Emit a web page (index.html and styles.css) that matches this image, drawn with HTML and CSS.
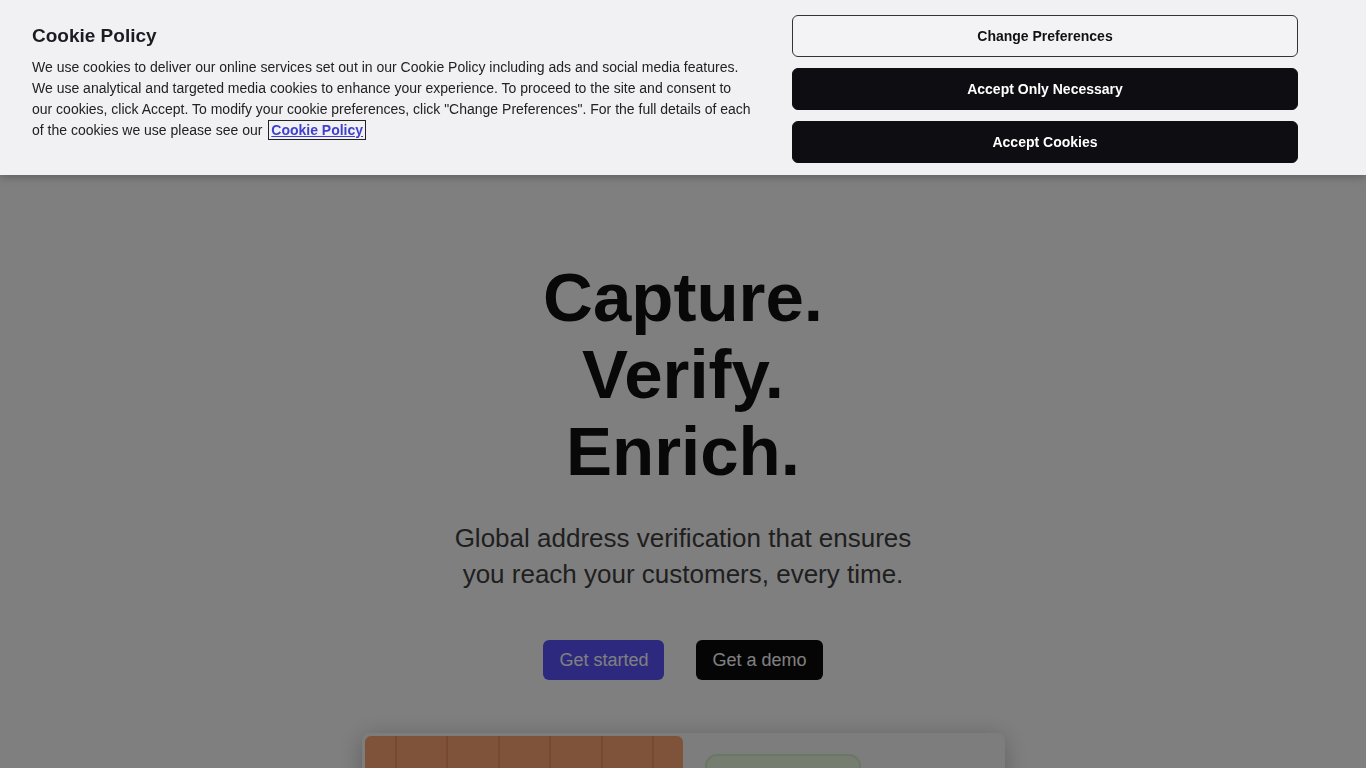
FILE: index.html
```html
<!DOCTYPE html>
<html lang="en">
<head>
    <meta charset="UTF-8">
    <meta name="viewport" content="width=device-width, initial-scale=1.0">
    <title>Capture. Verify. Enrich.</title>
    <link rel="stylesheet" href="styles.css">
</head>
<body>
    <main class="hero">
        <h1 class="hero-title">Capture.<br>Verify.<br>Enrich.</h1>
        <p class="hero-sub">Global address verification that ensures<br>you reach your customers, every time.</p>
        <div class="hero-actions">
            <a href="#" class="btn btn-primary">Get started</a>
            <a href="#" class="btn btn-dark">Get a demo</a>
        </div>

        <div class="preview-card">
            <div class="preview-map">
                <span class="map-col"></span>
                <span class="map-col"></span>
                <span class="map-col"></span>
                <span class="map-col"></span>
                <span class="map-col"></span>
                <span class="map-col"></span>
            </div>
            <div class="preview-side">
                <div class="status-pill"></div>
            </div>
        </div>
    </main>

    <div class="overlay"></div>

    <div class="cookie-banner" id="cookieBanner">
        <div class="cookie-text">
            <h2>Cookie Policy</h2>
            <p>We use cookies to deliver our online services set out in our Cookie Policy including ads and social media features. We use analytical and targeted media cookies to enhance your experience. To proceed to the site and consent to our cookies, click Accept. To modify your cookie preferences, click "Change Preferences". For the full details of each of the cookies we use please see our <a href="#" class="cookie-link">Cookie Policy</a></p>
        </div>
        <div class="cookie-buttons">
            <button class="cookie-btn cookie-btn-outline">Change Preferences</button>
            <button class="cookie-btn">Accept Only Necessary</button>
            <button class="cookie-btn">Accept Cookies</button>
        </div>
    </div>
</body>
</html>
```

FILE: styles.css
```css
body {
    margin: 0;
    font-family: "Liberation Sans", Arial, sans-serif;
    background-color: #ffffff;
    color: #141414;
    overflow: hidden;
}
.hero {
    display: flex;
    flex-direction: column;
    align-items: center;
    padding-top: 259px;
    text-align: center;
}
.hero-title {
    margin: 0;
    font-size: 69px;
    line-height: 77px;
    font-weight: bold;
    color: #111;
}
.hero-sub {
    margin: 30px 0 0 0;
    font-size: 26px;
    line-height: 36px;
    color: #3e3e3e;
}
.hero-actions {
    display: flex;
    gap: 32px;
    margin-top: 48px;
}
.btn {
    display: inline-flex;
    align-items: center;
    height: 40px;
    padding: 0 16px;
    border-radius: 6px;
    font-size: 18px;
    color: #ffffff;
    text-decoration: none;
}
.btn-primary {
    background-color: #5b52ff;
}
.btn-dark {
    background-color: #0a0a0a;
}
.preview-card {
    display: flex;
    width: 643px;
    height: 200px;
    box-sizing: border-box;
    margin-top: 53px;
    padding: 3px;
    background-color: #fafafa;
    border-radius: 8px;
    box-shadow: 0 4px 24px rgba(0,0,0,0.25);
}
.preview-map {
    display: flex;
    flex: 0 0 318px;
    box-sizing: border-box;
    padding-left: 30px;
    overflow: hidden;
    background-color: #ffa674;
    border-radius: 6px 6px 0 0;
}
.map-col {
    flex: 0 0 51.5px;
    box-sizing: border-box;
    border-left: 2px solid #f0935f;
}
.preview-side {
    flex: 1;
    padding: 18px 22px;
}
.status-pill {
    width: 152px;
    height: 60px;
    background-color: #eaf9e0;
    border: 2px solid #d4eec4;
    border-radius: 12px;
}
.overlay {
    position: fixed;
    top: 0;
    left: 0;
    right: 0;
    bottom: 0;
    background-color: rgba(0,0,0,0.5);
}
.cookie-banner {
    position: fixed;
    top: 0;
    left: 0;
    right: 0;
    height: 175px;
    box-sizing: border-box;
    display: flex;
    gap: 39px;
    padding: 15px 68px 0 32px;
    background-color: #f1f1f4;
    box-shadow: 0 2px 8px rgba(0,0,0,0.25);
}
.cookie-text {
    width: 721px;
    padding-top: 9px;
}
.cookie-text h2 {
    margin: 0 0 10px 0;
    font-size: 19px;
    line-height: 23px;
    color: #1c1b22;
}
.cookie-text p {
    margin: 0;
    font-size: 14px;
    line-height: 21px;
    color: #222;
}
.cookie-link {
    margin-left: 4px;
    padding: 0 1px;
    font-weight: bold;
    color: #3f3fd0;
    outline: 1px solid #222;
    outline-offset: 1px;
}
.cookie-buttons {
    display: flex;
    flex-direction: column;
    gap: 11px;
    width: 506px;
}
.cookie-btn {
    height: 42px;
    border: 1px solid #0d0d12;
    border-radius: 6px;
    background-color: #0d0d12;
    color: #ffffff;
    font-family: "Liberation Sans", Arial, sans-serif;
    font-size: 14px;
    font-weight: bold;
    cursor: pointer;
}
.cookie-btn-outline {
    background-color: #f3f3f6;
    border-color: #333;
    color: #111;
}
```
